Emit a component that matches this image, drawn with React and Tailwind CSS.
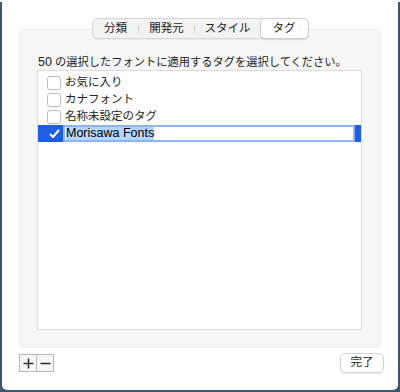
import React from 'react';

const tabs = [
  { label: '分類', w: 'w-[46px]' },
  { label: '開発元', w: 'w-[56px]' },
  { label: 'スタイル', w: 'w-[66px]' },
  { label: 'タグ', w: 'w-[47px]', active: true },
];

const tags = ['お気に入り', 'カナフォント', '名称未設定のタグ'];

function Checkbox() {
  return (
    <span className="w-[14px] h-[14px] rounded-[3px] border border-[#bdbdbd] bg-white shadow-[0_1px_0_rgba(0,0,0,0.04)] shrink-0" />
  );
}

export default function App() {
  return (
    <div className="w-[400px] h-[392px] bg-[#3d566e] font-['Liberation_Sans','Noto_Sans_CJK_JP',sans-serif] text-[#222]">
      <div className="w-[396px] h-[388px] ml-[2px] mt-[2px] bg-white rounded-b-[5px] flex flex-col">
        {/* tabs */}
        <div className="relative z-10 mt-[16px] self-center flex h-[21px] rounded-[5px] border border-[#d6d6d6] bg-[#f2f2f2] shadow-[0_1px_1px_rgba(0,0,0,0.05)] text-[11.5px]">
          {tabs.map((t, i) => (
            <div key={t.label} className={`relative flex items-center justify-center ${t.w}`}>
              {t.active ? (
                <div className="absolute inset-[-1px] flex items-center justify-center rounded-[5px] bg-white border border-[#cfcfcf] shadow-[0_1px_1px_rgba(0,0,0,0.08)]">
                  {t.label}
                </div>
              ) : (
                <span>{t.label}</span>
              )}
              {i < 2 && <span className="absolute right-0 top-[6px] h-[9px] w-px bg-[#cfcfcf]" />}
            </div>
          ))}
        </div>

        {/* panel */}
        <div className="ml-[17px] -mt-[10px] w-[362px] h-[319px] rounded-[5px] bg-[#f6f6f6] border border-[#ececec] pt-[24px] pl-[17px]">
          <p className="h-[16px] text-[11.25px] leading-[16px] ml-[1px]">
            <span className="text-[12.5px]">50</span> の選択したフォントに適用するタグを選択してください。
          </p>
          <div className="w-[325px] h-[260px] bg-white border border-[#dcdcdc] pt-[3px]">
            {tags.map((t) => (
              <div key={t} className="h-[17px] flex items-center pl-[9px] gap-[4px] text-[11.5px]">
                <Checkbox />
                <span>{t}</span>
              </div>
            ))}
            <div className="h-[17px] flex items-center bg-[#1c5fe5] pl-[9px] pr-[6px] gap-[2px]">
              <span className="w-[14px] h-[14px] flex items-center justify-center shrink-0">
                <svg width="13" height="12" viewBox="0 0 13 12" fill="none">
                  <path d="M2.5 6.5 L5 9 L10.5 2.5" stroke="white" strokeWidth="2" strokeLinecap="round" strokeLinejoin="round" />
                </svg>
              </span>
              <div className="flex-1 h-[17px] bg-white border-2 border-[#8db4f7] flex items-center pl-[1px]">
                <span className="bg-[#b4d5fe] text-[12.5px] leading-[13px] text-black">Morisawa Fonts</span>
              </div>
            </div>
          </div>
        </div>

        {/* bottom buttons */}
        <div className="flex items-center justify-between ml-[17px] mr-[14px] mt-[5px]">
          <div className="flex h-[18px] border border-[#b9b9b9] bg-[#f7f7f7]">
            <div className="w-[17px] flex items-center justify-center border-r border-[#b9b9b9]">
              <svg width="11" height="11" viewBox="0 0 11 11">
                <path d="M5.5 0.5 V10.5 M0.5 5.5 H10.5" stroke="#333" strokeWidth="1.6" />
              </svg>
            </div>
            <div className="w-[16px] flex items-center justify-center">
              <svg width="11" height="11" viewBox="0 0 11 11">
                <path d="M0.5 5.5 H10.5" stroke="#333" strokeWidth="1.6" />
              </svg>
            </div>
          </div>
          <button className="w-[44px] h-[20px] rounded-[5px] bg-white border border-[#d4d4d4] shadow-[0_1px_1px_rgba(0,0,0,0.08)] text-[11.5px] flex items-center justify-center">
            完了
          </button>
        </div>
      </div>
    </div>
  );
}
